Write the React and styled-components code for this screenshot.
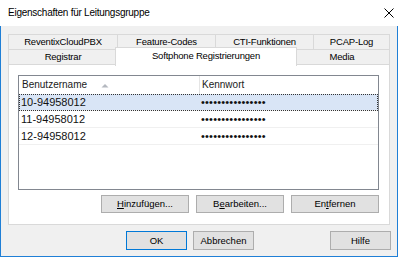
import React from "react";
import styled, { createGlobalStyle } from "styled-components";

const Global = createGlobalStyle`
  html, body { margin: 0; padding: 0; background: #fff; }
  * { box-sizing: border-box; }
`;

const FONT = `"Liberation Sans", Arial, sans-serif`;

const Window = styled.div`
  width: 398px;
  height: 257px;
  display: flex;
  flex-direction: column;
  font-family: ${FONT};
  color: #000;
  overflow: hidden;
`;

const TitleBar = styled.div`
  height: 26px;
  flex: none;
  display: flex;
  align-items: center;
  padding: 0 4px 1px 8px;
  background: #fff;
`;

const Title = styled.div`
  font-size: 10px;
  letter-spacing: -0.25px;
  color: #000;
`;

const CloseBtn = styled.div`
  margin-left: auto;
  width: 10px;
  height: 10px;
  display: flex;
`;

const Body = styled.div`
  flex: 1;
  display: flex;
  flex-direction: column;
  background: #f0f0f0;
  border: 1px solid #1f7fd6;
  border-top: none;
  padding: 8px 6px 0 7px;
`;

const TabControl = styled.div`
  width: 382px;
  display: flex;
  flex-direction: column;
`;

const TabRow = styled.div`
  display: flex;
  align-items: flex-start;
  height: 16px;
  margin-top: ${(p) => (p.$first ? 0 : -1)}px;
`;

const Tab = styled.div`
  flex: none;
  width: ${(p) => p.$w}px;
  height: 16px;
  margin-left: ${(p) => (p.$first ? 0 : -1)}px;
  border: 1px solid #d9d9d9;
  background: #f0f0f0;
  display: flex;
  align-items: center;
  justify-content: center;
  font-size: 9.5px;
  letter-spacing: -0.2px;
  padding-bottom: 1px;
  white-space: nowrap;
`;

const ActiveTab = styled(Tab)`
  position: relative;
  z-index: 2;
  width: ${(p) => p.$w + 4}px;
  margin-left: -3px;
  margin-right: -2px;
  margin-top: -2px;
  height: 19px;
  background: #fff;
  border-bottom: none;
  padding-bottom: 4px;
`;

const Panel = styled.div`
  position: relative;
  z-index: 1;
  margin-top: -1px;
  height: 161px;
  background: #fff;
  border: 1px solid #d9d9d9;
  padding: 10px 10px 0 9px;
  display: flex;
  flex-direction: column;
`;

const List = styled.div`
  height: 115px;
  border: 1px solid #828790;
  background: #fff;
  display: flex;
  flex-direction: column;
`;

const Header = styled.div`
  height: 18px;
  display: flex;
  font-size: 10px;
  color: #1a1a1a;
`;

const HeadCell = styled.div`
  width: ${(p) => (p.$w ? `${p.$w}px` : "auto")};
  flex: ${(p) => (p.$w ? "none" : "1")};
  display: flex;
  align-items: center;
  padding-left: ${(p) => p.$pl}px;
  padding-bottom: 1px;
  border-right: ${(p) => (p.$sep ? "1px solid #e5e5e5" : "none")};
  position: relative;
`;

const SortArrow = styled.svg`
  position: absolute;
  left: 82px;
  top: 7px;
`;

const Row = styled.div`
  height: 17px;
  display: flex;
  border-bottom: 1px solid #f0f0f0;
  background: ${(p) => (p.$sel ? "#d9e5f6" : "transparent")};
  outline: ${(p) => (p.$sel ? "1px dotted #333" : "none")};
  outline-offset: -1px;
  font-size: 11px;
  color: #111;
`;

const Cell = styled.div`
  width: ${(p) => (p.$w ? `${p.$w}px` : "auto")};
  flex: ${(p) => (p.$w ? "none" : "1")};
  display: flex;
  align-items: center;
  padding-left: ${(p) => p.$pl}px;
  white-space: nowrap;
`;

const Dots = styled.span`
  font-size: 11px;
  letter-spacing: 0.2px;
`;

const ButtonRow = styled.div`
  display: flex;
  justify-content: flex-end;
  gap: 7px;
  margin-top: 5px;
`;

const Button = styled.div`
  width: ${(p) => p.$w}px;
  height: ${(p) => p.$h}px;
  background: #e1e1e1;
  border: 1px solid ${(p) => (p.$default ? "#0078d7" : "#adadad")};
  display: flex;
  align-items: center;
  justify-content: center;
  font-size: 9.5px;
  padding-bottom: 1px;
  white-space: nowrap;
  u { text-decoration: underline; text-underline-offset: 1px; }
`;

const Footer = styled.div`
  display: flex;
  justify-content: flex-end;
  margin-top: 6px;
  gap: 6px;
`;

const Spacer = styled.div`
  width: 64px;
`;

export default function App() {
  const rows = ["10-94958012", "11-94958012", "12-94958012"];
  return (
    <>
      <Global />
      <Window>
        <TitleBar>
          <Title>Eigenschaften für Leitungsgruppe</Title>
          <CloseBtn>
            <svg width="10" height="10" viewBox="0 0 10 10">
              <path d="M0.5 0.5 L9.5 9.5 M9.5 0.5 L0.5 9.5" stroke="#000" strokeWidth="1" />
            </svg>
          </CloseBtn>
        </TitleBar>
        <Body>
          <TabControl>
            <TabRow $first>
              <Tab $first $w={110}>ReventixCloudPBX</Tab>
              <Tab $w={99}>Feature-Codes</Tab>
              <Tab $w={99}>CTI-Funktionen</Tab>
              <Tab $w={77}>PCAP-Log</Tab>
            </TabRow>
            <TabRow>
              <Tab $first $w={110}>Registrar</Tab>
              <ActiveTab $w={178}>Softphone Registrierungen</ActiveTab>
              <Tab $w={96}>Media</Tab>
            </TabRow>
            <Panel>
              <List>
                <Header>
                  <HeadCell $w={181} $pl={3} $sep>
                    Benutzername
                    <SortArrow width="8" height="5" viewBox="0 0 8 5">
                      <path d="M0.5 4.5 L4 1 L7.5 4.5 Z" fill="#b4b8bf" />
                    </SortArrow>
                  </HeadCell>
                  <HeadCell $pl={2}>Kennwort</HeadCell>
                </Header>
                {rows.map((r, i) => (
                  <Row key={r} $sel={i === 0}>
                    <Cell $w={181} $pl={2}>{r}</Cell>
                    <Cell $pl={1}>
                      <Dots>{"\u2022".repeat(16)}</Dots>
                    </Cell>
                  </Row>
                ))}
              </List>
              <ButtonRow>
                <Button $w={88} $h={18}>
                  <span><u>H</u>inzufügen...</span>
                </Button>
                <Button $w={88} $h={18}>
                  <span>B<u>e</u>arbeiten...</span>
                </Button>
                <Button $w={88} $h={18}>
                  <span>En<u>t</u>fernen</span>
                </Button>
              </ButtonRow>
            </Panel>
          </TabControl>
          <Footer>
            <Button $w={61} $h={19} $default>OK</Button>
            <Button $w={61} $h={19}>Abbrechen</Button>
            <Spacer />
            <Button $w={61} $h={19}>Hilfe</Button>
          </Footer>
        </Body>
      </Window>
    </>
  );
}
